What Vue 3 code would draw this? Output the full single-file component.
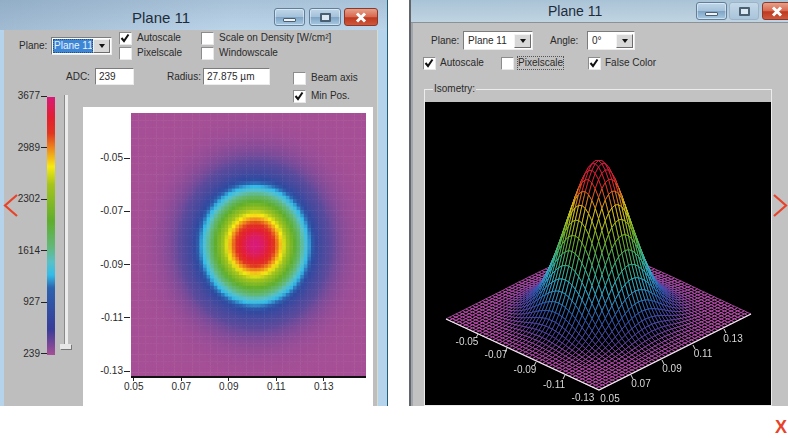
<script setup>
import { ref, onMounted } from 'vue'

/* ---- colour scale, 0 = top of legend, 1 = bottom ---- */
const scale = [
  [0, '#d81b78'], [0.08, '#e31f30'], [0.14, '#e0351f'], [0.2, '#ee8a1c'], [0.27, '#f6ea12'],
  [0.34, '#a5c41c'], [0.48, '#5fae2c'], [0.58, '#62b878'], [0.64, '#58c0c8'], [0.69, '#34bce8'],
  [0.74, '#2c62ae'], [0.9, '#383c98'], [1, '#a64f96'],
]
// the map fades out to the background sooner than the legend does
const heatScale = [
  ...scale.slice(0, 11),
  [0.78, '#2f4aa0'], [0.907, '#5a4a9c'], [0.967, '#8a4c98'], [1, '#a64f96'],
]
const meshScale = [
  [0, '#e0204a'], [0.12, '#e8232c'], [0.22, '#f09020'], [0.3, '#ecd820'], [0.45, '#78c030'],
  [0.6, '#40c090'], [0.72, '#38b8e0'], [0.85, '#3560c0'], [0.95, '#6048b0'], [1, '#cc55bc'],
]

function hex(c) {
  return [1, 3, 5].map((i) => parseInt(c.slice(i, i + 2), 16))
}
function colorAt(stops, t) {
  for (let i = 1; i < stops.length; i++) {
    if (t <= stops[i][0]) {
      const [t0, c0] = stops[i - 1]
      const [t1, c1] = stops[i]
      const f = (t - t0) / (t1 - t0)
      const a = hex(c0)
      const b = hex(c1)
      return `rgb(${a.map((v, k) => Math.round(v + (b[k] - v) * f)).join(',')})`
    }
  }
  return stops[stops.length - 1][1]
}

const legendBar = `linear-gradient(to bottom, ${scale.map(([t, c]) => `${c} ${t * 100}%`).join(', ')})`

const legendTicks = ['3677', '2989', '2302', '1614', '927', '239']
const yTicks = ['-0.05', '-0.07', '-0.09', '-0.11', '-0.13']
const xTicks = ['0.05', '0.07', '0.09', '0.11', '0.13']

/* ---- 2D heat map ---- */
const heat = ref(null)
onMounted(() => {
  const ctx = heat.value.getContext('2d')
  const cell = 3.6
  for (let y = 0; y < 263; y += cell) {
    for (let x = 0; x < 235; x += cell) {
      const dx = (x + cell / 2 - 124) / 34.4
      const dy = (y + cell / 2 - 132) / 38
      const v = Math.exp(-(dx * dx + dy * dy) / 2)
      ctx.fillStyle = colorAt(heatScale, 1 - v)
      ctx.fillRect(x, y, cell + 0.5, cell + 0.5)
    }
  }
})

/* ---- isometric wireframe, drawn back to front ---- */
const N = 46
const front = [174, 288]
const height = (u, v) => Math.exp(-((u - 0.5) ** 2 + (v - 0.5) ** 2) / (2 * 0.148 * 0.148))
function project(u, v) {
  return [front[0] + u * 152 - v * 153, front[1] - u * 76 - v * 71 - height(u, v) * 156]
}
const quads = []
for (let s = 2 * N - 2; s >= 0; s--) {
  for (let i = 0; i < N; i++) {
    const j = s - i
    if (j < 0 || j >= N) continue
    const u0 = i / N
    const u1 = (i + 1) / N
    const v0 = j / N
    const v1 = (j + 1) / N
    const pts = [project(u0, v0), project(u1, v0), project(u1, v1), project(u0, v1)]
    const h = height((u0 + u1) / 2, (v0 + v1) / 2)
    quads.push({
      id: `${i}-${j}`,
      points: pts.map((p) => p.map((n) => n.toFixed(1)).join(',')).join(' '),
      color: colorAt(meshScale, 1 - h),
    })
  }
}
const isoLeftLabels = [
  ['-0.05', 42, 243], ['-0.07', 71, 256], ['-0.09', 100, 271], ['-0.11', 129, 286], ['-0.13', 158, 299],
]
const isoRightLabels = [
  ['0.05', 185, 300], ['0.07', 216, 285], ['0.09', 247, 270], ['0.11', 278, 255], ['0.13', 308, 240],
]
const isoTicks = [
  [53, 232, 51, 236], [82, 246, 80, 250], [111, 260, 109, 264], [140, 273, 138, 277],
  [206, 273, 208, 277], [237, 258, 239, 262], [268, 243, 270, 247], [299, 227, 301, 231],
]
</script>

<template>
  <div class="page">
    <div class="windows">
      <!-- 2D view -->
      <section class="win win-left">
        <header class="titlebar">
          <span class="title">Plane 11</span>
          <div class="caption">
            <button class="cap cap-min"><i class="glyph-min"></i></button>
            <button class="cap cap-max"><i class="glyph-max"></i></button>
            <button class="cap cap-close">
              <svg width="16" height="11" viewBox="0 0 16 11"><path d="M4 1.5 12 9.5M12 1.5 4 9.5" stroke="#fff" stroke-width="3" /></svg>
            </button>
          </div>
        </header>
        <div class="body">
          <div class="client">
            <div class="row-top">
              <span class="lbl plane-lbl">Plane:</span>
              <div class="combo combo-sel">
                <span class="combo-text selected">Plane 11</span>
                <span class="drop"><i></i></span>
              </div>
              <div class="checks col-a">
                <label class="check">
                  <span class="box"><svg width="12" height="12" viewBox="0 0 12 12"><path d="M2.5 6 5 9 9.5 2.5" fill="none" stroke="#111" stroke-width="2" /></svg></span>Autoscale
                </label>
                <label class="check"><span class="box"></span>Pixelscale</label>
              </div>
              <div class="checks">
                <label class="check"><span class="box"></span>Scale on Density [W/cm²]</label>
                <label class="check"><span class="box"></span>Windowscale</label>
              </div>
            </div>
            <div class="row-mid">
              <span class="lbl adc-lbl">ADC:</span>
              <span class="field adc-field">239</span>
              <span class="lbl radius-lbl">Radius:</span>
              <span class="field radius-field">27.875 µm</span>
              <label class="check beam"><span class="box"></span>Beam axis</label>
            </div>
            <div class="main">
              <div class="legend">
                <div class="legend-labels">
                  <div v-for="t in legendTicks" :key="t" class="legend-row">
                    <span>{{ t }}</span><i class="tick-h"></i>
                  </div>
                </div>
                <div class="legend-bar" :style="{ background: legendBar }"></div>
                <div class="slider"><div class="thumb"></div></div>
              </div>
              <div class="plot-col">
                <label class="check minpos">
                  <span class="box"><svg width="12" height="12" viewBox="0 0 12 12"><path d="M2.5 6 5 9 9.5 2.5" fill="none" stroke="#111" stroke-width="2" /></svg></span>Min Pos.
                </label>
                <div class="plot">
                  <div class="plot-top">
                    <div class="y-axis">
                      <div v-for="t in yTicks" :key="t" class="y-row">
                        <span>{{ t }}</span><i class="tick-h"></i>
                      </div>
                    </div>
                    <canvas ref="heat" class="heat" width="235" height="263"></canvas>
                  </div>
                  <div class="x-axis">
                    <div v-for="t in xTicks" :key="t" class="x-item">
                      <i class="tick-v"></i><span>{{ t }}</span>
                    </div>
                  </div>
                </div>
              </div>
            </div>
          </div>
          <div class="frame-strip"></div>
        </div>
      </section>

      <!-- isometric view -->
      <section class="win win-right">
        <header class="titlebar titlebar-r">
          <span class="title title-r">Plane 11</span>
          <div class="caption caption-r">
            <button class="cap cap-min"><i class="glyph-min"></i></button>
            <button class="cap cap-max cap-max-r"><i class="glyph-max"></i></button>
            <button class="cap cap-close cap-close-r">
              <svg width="16" height="11" viewBox="0 0 16 11"><path d="M4 1.5 12 9.5M12 1.5 4 9.5" stroke="#fff" stroke-width="3" /></svg>
            </button>
          </div>
        </header>
        <div class="client client-r">
          <div class="row-r1">
            <span class="lbl plane-lbl">Plane:</span>
            <div class="combo combo-plane">
              <span class="combo-text">Plane 11</span>
              <span class="drop"><i></i></span>
            </div>
            <span class="lbl angle-lbl">Angle:</span>
            <div class="combo combo-angle">
              <span class="combo-text">0°</span>
              <span class="drop"><i></i></span>
            </div>
          </div>
          <div class="row-r2">
            <label class="check item-auto">
              <span class="box"><svg width="12" height="12" viewBox="0 0 12 12"><path d="M2.5 6 5 9 9.5 2.5" fill="none" stroke="#111" stroke-width="2" /></svg></span>Autoscale
            </label>
            <label class="check item-pix"><span class="box"></span><span class="focus">Pixelscale</span></label>
            <label class="check">
              <span class="box"><svg width="12" height="12" viewBox="0 0 12 12"><path d="M2.5 6 5 9 9.5 2.5" fill="none" stroke="#111" stroke-width="2" /></svg></span>False Color
            </label>
          </div>
          <fieldset class="group">
            <legend>Isometry:</legend>
            <svg class="iso" width="346" height="303" viewBox="0 0 346 303">
              <g class="mesh">
                <polygon v-for="q in quads" :key="q.id" :points="q.points" fill="#000" :stroke="q.color" stroke-width="0.8" />
              </g>
              <path d="M21 217 174 288 326 212" fill="none" stroke="#eee" stroke-width="1.2" />
              <line v-for="(t, i) in isoTicks" :key="i" :x1="t[0]" :y1="t[1]" :x2="t[2]" :y2="t[3]" stroke="#ddd" />
              <text v-for="l in isoLeftLabels" :key="l[0]" :x="l[1]" :y="l[2]" class="iso-label">{{ l[0] }}</text>
              <text v-for="l in isoRightLabels" :key="l[0]" :x="l[1]" :y="l[2]" class="iso-label">{{ l[0] }}</text>
            </svg>
          </fieldset>
        </div>
      </section>
    </div>

    <footer class="foot"><span class="close-x">X</span></footer>

    <svg class="arrow arrow-prev" width="16" height="25" viewBox="0 0 16 25"><path d="M14 2 2 12.5 14 23" fill="none" stroke="#e8432a" stroke-width="2.2" /></svg>
    <svg class="arrow arrow-next" width="16" height="25" viewBox="0 0 16 25"><path d="M2 2 14 12.5 2 23" fill="none" stroke="#e8432a" stroke-width="2.2" /></svg>
  </div>
</template>

<style>
html, body { background: #fff; }
</style>

<style scoped>
.page {
  position: relative;
  width: 788px;
  height: 438px;
  overflow: hidden;
  background: #fff;
  font-family: "Liberation Sans", Arial, sans-serif;
  font-size: 10px;
  line-height: 12px;
  color: #2a2a2a;
}
.windows { display: flex; height: 406px; }
.win { display: flex; flex-direction: column; height: 406px; flex-shrink: 0; }
.win-left {
  width: 387px;
  border-right: 1px solid #1f5f78;
  background: #b6d3ec;
}
.win-right {
  width: 380px;
  margin-left: 21px;
  border-left: 2px solid #62666a;
}

/* ---- title bars ---- */
.titlebar {
  display: flex;
  align-items: flex-start;
  height: 30px;
  flex-shrink: 0;
  background:
    linear-gradient(90deg, rgba(110, 140, 170, 0.35), rgba(190, 215, 235, 0.1) 60%),
    linear-gradient(180deg, #a5bfd6, #bcd4e8);
}
.titlebar-r {
  height: 23px;
  border-bottom: 1px solid #8a9298;
  box-sizing: border-box;
  background: linear-gradient(180deg, #a9c3d6, #c0d4e2);
}
.title {
  margin: 9px 0 0 132px;
  font-size: 15px;
  line-height: 17px;
  color: #1e2c3a;
}
.title-r { margin: 3px 0 0 137px; font-size: 14px; line-height: 17px; }
.caption { display: flex; margin: 8px 9px 0 auto; gap: 4px; }
.caption-r { margin: 2px 0 0 auto; gap: 2px; }
.cap {
  display: flex;
  align-items: center;
  justify-content: center;
  width: 31px;
  height: 18px;
  padding: 0;
  box-sizing: border-box;
  border: 1px solid #5f7f9a;
  border-radius: 3px;
  background: linear-gradient(180deg, #c0d6e8 0%, #a5c2da 48%, #7ea4c6 52%, #a8c8e0 100%);
  box-shadow: inset 0 0 0 1px rgba(255, 255, 255, 0.45);
}
.cap-max { width: 32px; }
.cap-close {
  width: 34px;
  margin-left: -1px;
  border-color: #8a3a2a;
  background: linear-gradient(180deg, #e6a08a 0%, #d86a50 48%, #bc3a20 55%, #d0583c 100%);
  box-shadow: none;
}
.cap-max-r { width: 30px; border-color: #9db4c8; background: linear-gradient(180deg, #c4d8e8, #a9c4da); box-shadow: none; }
.cap-close-r { width: 29px; margin-left: 1px; border-radius: 3px 0 0 3px; }
.glyph-min {
  display: block;
  width: 13px;
  height: 4px;
  margin-top: 5px;
  box-sizing: border-box;
  border: 1px solid #4a5f72;
  border-radius: 1px;
  background: #eef4fa;
}
.glyph-max {
  display: block;
  width: 11px;
  height: 9px;
  box-sizing: border-box;
  border: 2px solid #4a5f72;
  border-radius: 1px;
  background: #dce8f2;
}

/* ---- client areas ---- */
.body { display: flex; height: 376px; padding-left: 4px; }
.client {
  display: flex;
  flex-direction: column;
  width: 373px;
  background: #bebebe;
}
.client-r {
  width: 376px;
  height: 383px;
  margin-left: 2px;
  overflow: hidden;
  background: #c2c2c2;
  box-shadow: -2px 0 0 #a0a6ac;
}
.frame-strip { width: 1px; background: #d6dcd0; }

.lbl { flex-shrink: 0; }
.row-top { display: flex; height: 28px; margin-top: 2px; padding-left: 15px; }
.plane-lbl { width: 32px; margin-top: 8px; }
.combo-sel { width: 61px; margin-top: 5px; }
.col-a { width: 82px; margin-left: 7px; }
.checks { display: flex; flex-direction: column; gap: 3px; }
.check { display: flex; align-items: center; gap: 6px; height: 12px; white-space: nowrap; }
.box {
  display: block;
  width: 12px;
  height: 12px;
  flex-shrink: 0;
  box-sizing: border-box;
  background: #fff;
  box-shadow: inset 1px 1px 0 #8c8c8c, 1px 1px 0 #e8e8e8;
}
.box svg { display: block; }

.combo {
  display: flex;
  align-items: center;
  height: 18px;
  box-sizing: border-box;
  padding: 1px;
  background: #fff;
  border: 1px solid;
  border-color: #7c7c7c #ececec #ececec #7c7c7c;
}
.combo-text { flex: 1; min-width: 0; padding-left: 3px; line-height: 14px; white-space: nowrap; overflow: hidden; }
.selected { padding-left: 1px; background: #3d86d6; color: #e8f2fc; outline: 1px dotted #1f4f86; outline-offset: -1px; }
.drop {
  display: flex;
  align-items: center;
  justify-content: center;
  width: 17px;
  height: 14px;
  flex-shrink: 0;
  box-sizing: border-box;
  background: #d8d8d8;
  border: 1px solid;
  border-color: #f4f4f4 #6c6c6c #6c6c6c #f4f4f4;
}
.drop i {
  display: block;
  width: 0;
  height: 0;
  border: 3.5px solid transparent;
  border-top: 4px solid #111;
  border-bottom: 0;
}

.row-mid { display: flex; align-items: center; height: 17px; margin-top: 8px; }
.adc-lbl { width: 29px; margin-left: 62px; }
.field {
  height: 17px;
  flex-shrink: 0;
  box-sizing: border-box;
  padding-left: 3px;
  line-height: 16px;
  background: #fff;
  border: 1px solid;
  border-color: #7c7c7c #ececec #ececec #7c7c7c;
}
.adc-field { width: 39px; }
.radius-lbl { width: 36px; margin-left: 33px; }
.radius-field { width: 67px; }
.beam { margin-left: 23px; margin-top: 3px; }

.main { display: flex; flex: 1; margin-top: 3px; min-height: 0; }
.legend { display: flex; width: 79px; flex-shrink: 0; }
.legend-labels {
  display: flex;
  flex-direction: column;
  justify-content: space-between;
  width: 43px;
  height: 270px;
  margin-top: 2px;
}
.legend-row { display: flex; align-items: center; justify-content: flex-end; height: 12px; gap: 1px; }
.tick-h { display: block; width: 6px; height: 1px; background: #222; }
.legend-bar { width: 8px; height: 258px; margin-top: 9px; }
.slider {
  position: relative;
  width: 3px;
  height: 250px;
  margin: 7px 0 0 10px;
  background: #ececec;
  box-shadow: -1px 0 0 #8a8a8a;
}
.thumb {
  position: absolute;
  left: -5px;
  bottom: -4px;
  width: 11px;
  height: 5px;
  background: #e6e6e6;
  box-shadow: 1px 1px 0 #777;
}

.plot-col { display: flex; flex-direction: column; width: 290px; }
.minpos { margin: 2px 0 5px 210px; }
.plot { flex: 1; background: #fff; }
.plot-top { display: flex; padding-top: 6px; }
.y-axis {
  display: flex;
  flex-direction: column;
  justify-content: space-between;
  width: 47px;
  height: 225px;
  margin-top: 39px;
  margin-right: 1px;
  flex-shrink: 0;
}
.y-row { display: flex; align-items: center; justify-content: flex-end; height: 12px; gap: 1px; }
.heat {
  display: block;
  width: 235px;
  height: 263px;
  border-bottom: 2px solid #111;
  filter: blur(0.4px);
}
.x-axis { display: flex; margin-left: 27px; }
.x-item { display: flex; flex-direction: column; align-items: center; width: 47.5px; }
.tick-v { display: block; width: 1px; height: 3px; background: #222; }

/* ---- right window ---- */
.row-r1 { display: flex; padding: 8px 0 0 18px; height: 19px; }
.row-r1 .plane-lbl { margin-top: 4px; }
.combo-plane { width: 70px; height: 19px; }
.angle-lbl { width: 37px; margin: 4px 0 0 17px; }
.combo-angle { width: 48px; height: 19px; }
.row-r2 { display: flex; margin-top: 7px; padding-left: 10px; height: 13px; align-items: center; }
.row-r2 .check { gap: 5px; }
.item-auto { width: 78px; }
.item-pix { width: 87px; }
.focus { outline: 1px dotted #555; outline-offset: 0; }
.group {
  display: block;
  width: 348px;
  height: 340px;
  min-width: 0;
  margin: 14px 0 0 11px;
  padding: 7px 0 0;
  box-sizing: border-box;
  border: 1px solid #ececec;
  box-shadow: 0 -1px 0 #a8a8a8 inset;
}
.group legend { margin-left: 8px; padding: 0 1px; line-height: 12px; }
.iso { display: block; background: #000; filter: blur(0.25px); }
.iso-label { font-size: 10px; fill: #d8d8d8; text-anchor: middle; }

/* ---- footer and pager ---- */
.foot { display: flex; justify-content: flex-end; padding: 10px 1px 0 0; }
.close-x { font-size: 18px; font-weight: 700; line-height: 22px; color: #e8432a; }
.arrow { position: absolute; top: 193px; }
.arrow-prev { left: 3px; }
.arrow-next { left: 772px; }
</style>
